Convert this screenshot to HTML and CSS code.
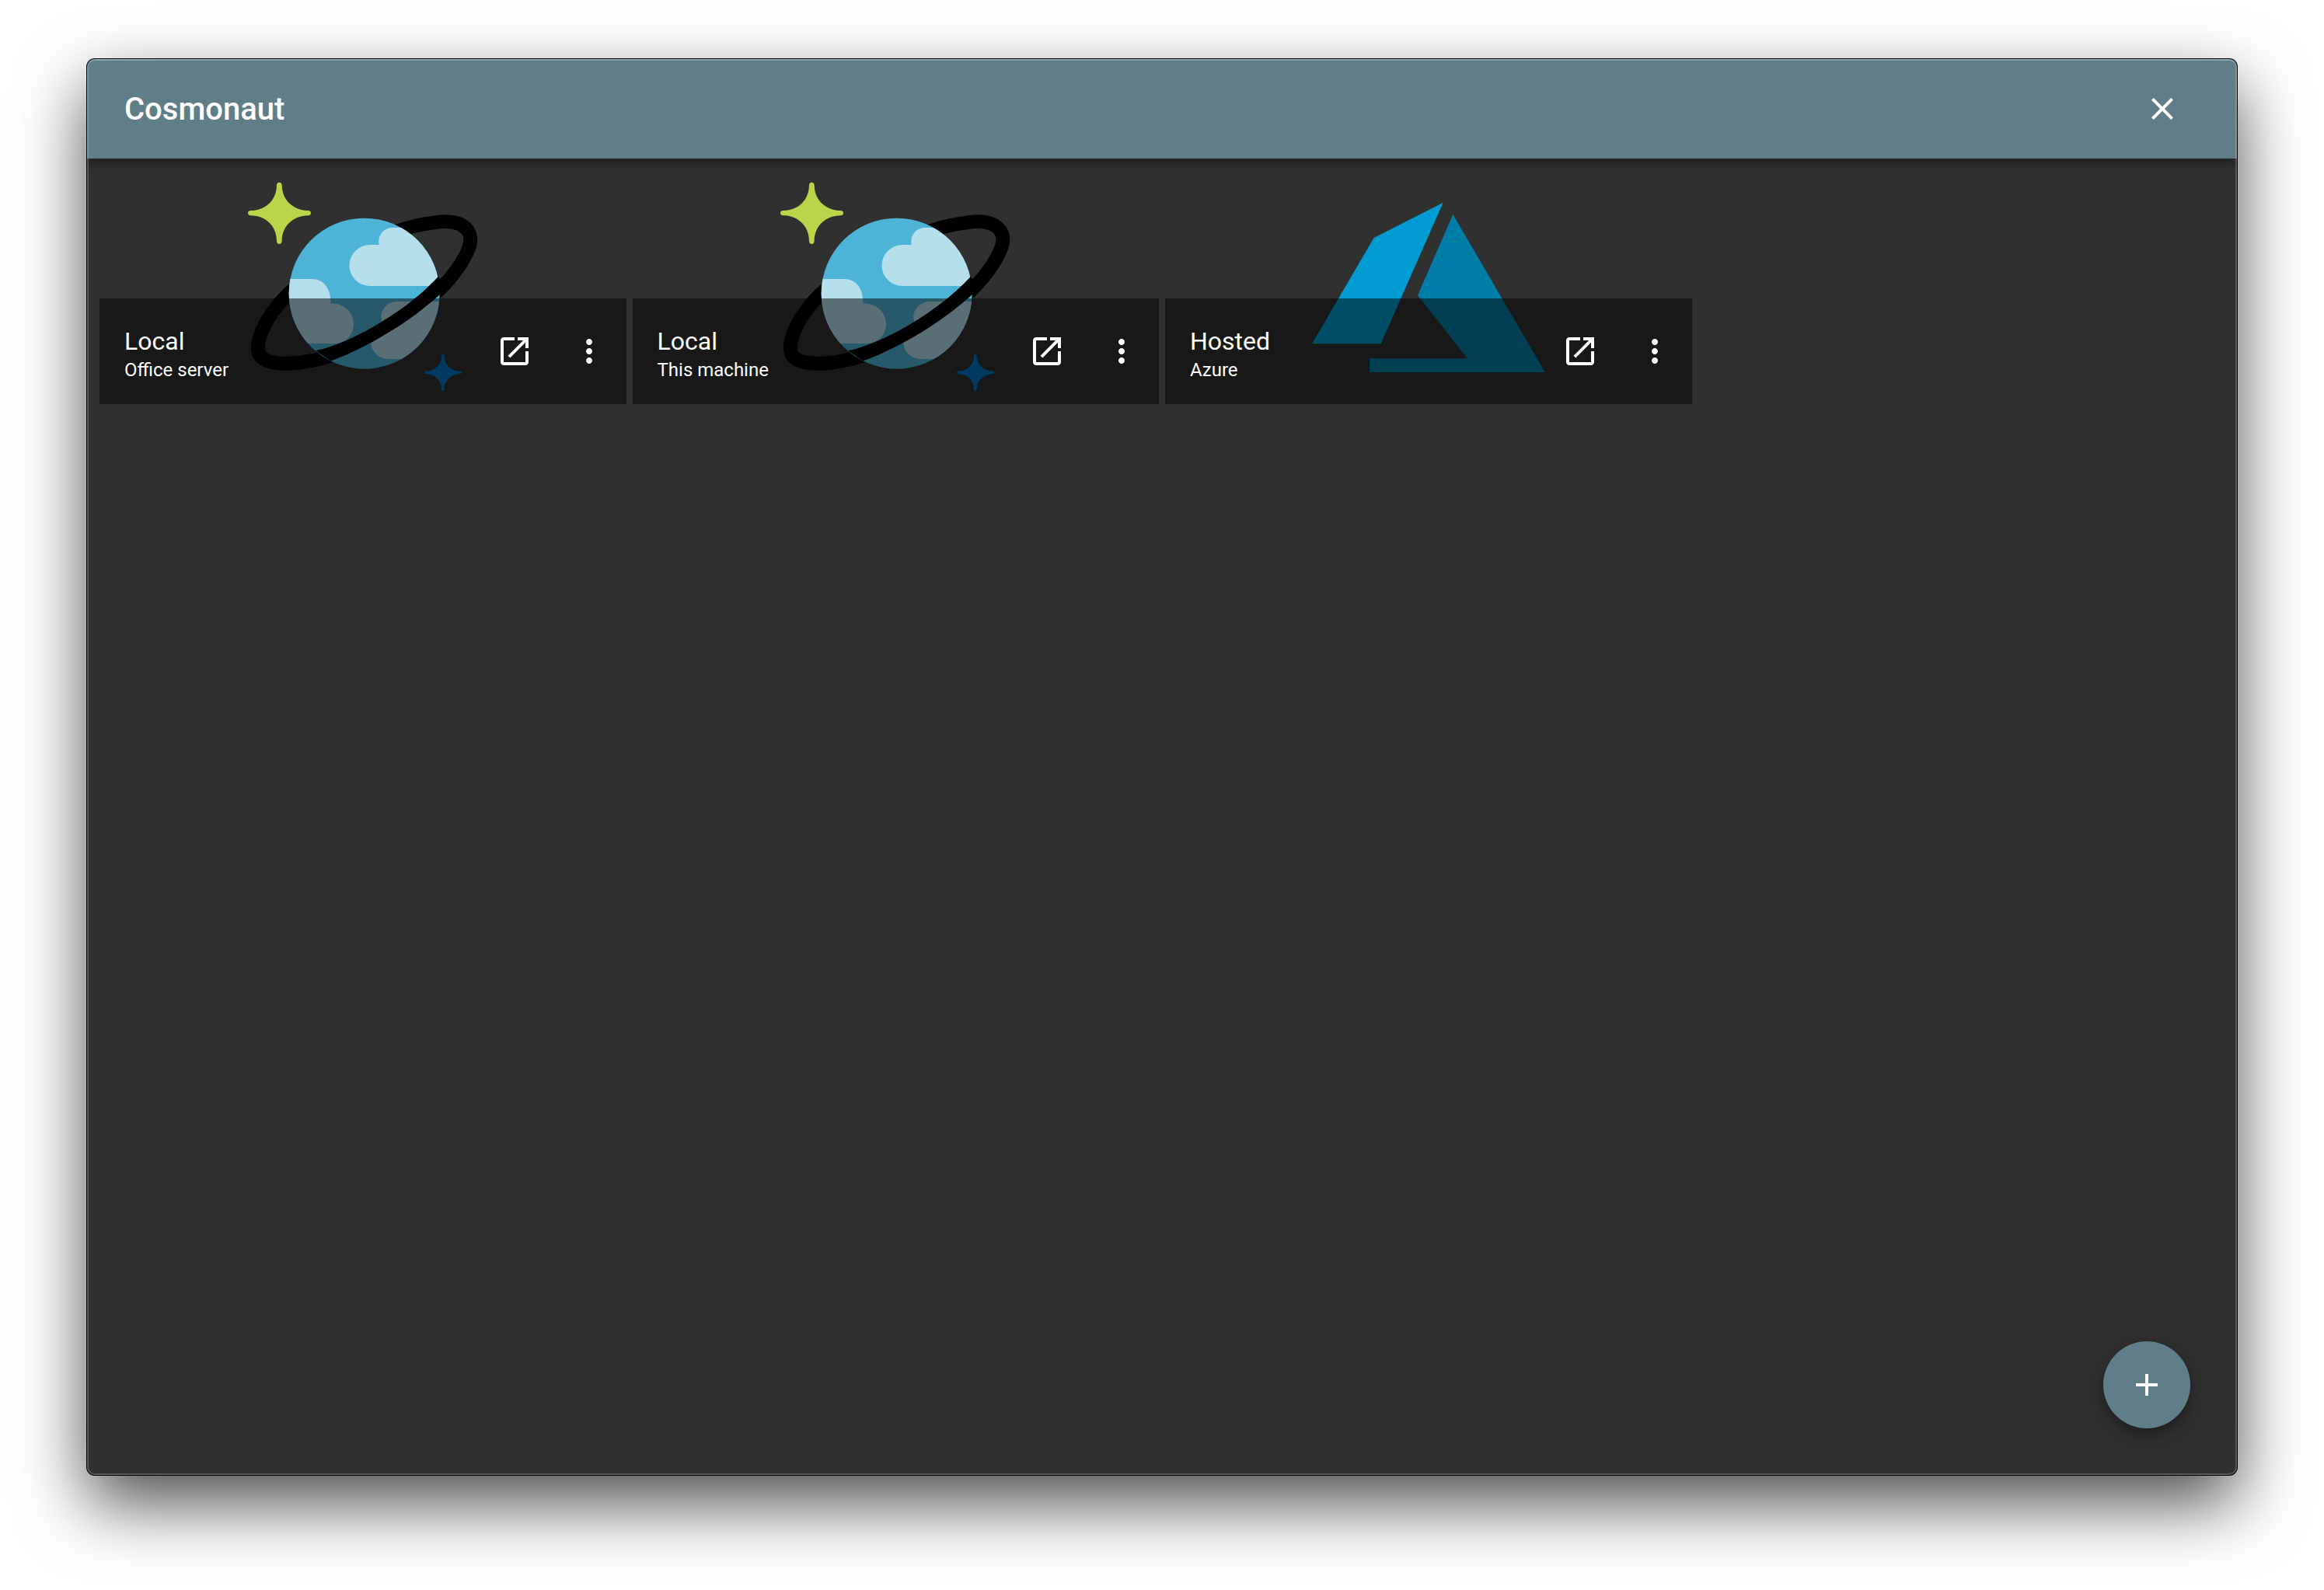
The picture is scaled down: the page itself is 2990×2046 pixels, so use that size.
FILE: index.html
```html
<!DOCTYPE html>
<html lang="en">
<head>
<meta charset="utf-8">
<title>Cosmonaut</title>
<link rel="stylesheet" href="styles.css">
</head>
<body>
<svg class="sprite" aria-hidden="true">
  <symbol id="cosmos" viewBox="-9 -15 960 900">
    <clipPath id="globe"><circle cx="476" cy="458" r="291"/></clipPath>
    <path d="M476 644C650 560 772 450 830 370C880 300 900 250 876 215C850 180 800 175 740 185C560 205 300 350 180 462C90 550 45 660 75 700C120 750 300 735 476 644Z" fill="none" stroke="#000" stroke-width="53"/>
    <circle cx="476" cy="458" r="291" fill="#4db4d7"/>
    <g clip-path="url(#globe)" fill="#b5dfeb">
      <path d="M498 429A79 79 0 0 1 498 270H533C526 235 550 204 585 204H800V429Z"/>
      <path d="M150 402H274C320 402 348 440 346 497C395 494 435 530 435 575C435 620 402 651 358 651H150Z"/>
      <path d="M800 489H608C565 489 536 520 542 560C550 590 502 600 502 644C502 685 535 711 572 711H800Z"/>
    </g>
    <path d="M288 679C350 665 410 640 476 606C590 545 690 470 762 392L790 440C710 520 600 595 500 649C445 678 395 702 346 718Z" fill="#000"/>
    <path d="M148 29C154 29 158 33 158 40C158 95 200 138 260 138C266 138 270 142 270 147C270 153 266 157 260 157C200 157 158 200 158 256C158 263 154 267 148 267C142 267 138 263 138 256C138 200 97 157 38 157C31 157 27 153 27 147C27 142 31 138 38 138C97 138 138 95 138 40C138 33 142 29 148 29Z" fill="#bad54a"/>
    <path d="M779 692C783 692 785 695 785 699C785 732 811 758 846 758C850 758 852 760 852 763C852 767 850 769 846 769C811 769 785 795 785 828C785 832 783 834 779 834C776 834 774 832 774 828C774 795 749 769 714 769C710 769 708 767 708 763C708 760 710 758 714 758C749 758 774 732 774 699C774 695 776 692 779 692Z" fill="#0072c5"/>
  </symbol>
  <symbol id="azure" viewBox="0 0 960 900">
    <path d="M536 122L269 258L30 667H296Z" fill="#009cd1"/>
    <path d="M574 168L438 480L630 724H252V777H930Z" fill="#007ea8"/>
  </symbol>
  <symbol id="open" viewBox="0 0 24 24"><path d="M19 19H5V5h7V3H5c-1.110 0-2 .9-2 2v14c0 1.100.89 2 2 2h14c1.100 0 2-.9 2-2v-7h-2v7zM14 3v2h3.590l-9.830 9.830 1.410 1.410L19 6.410V10h2V3h-7z"/></symbol>
  <symbol id="more" viewBox="0 0 24 24"><path d="M12 8c1.100 0 2-.9 2-2s-.9-2-2-2-2 .9-2 2 .9 2 2 2zm0 2c-1.100 0-2 .9-2 2s.9 2 2 2 2-.9 2-2-.9-2-2-2zm0 6c-1.100 0-2 .9-2 2s.9 2 2 2 2-.9 2-2-.9-2-2-2z"/></symbol>
  <symbol id="close" viewBox="0 0 24 24"><path d="M19 6.410L17.590 5 12 10.590 6.410 5 5 6.410 10.590 12 5 17.590 6.410 19 12 13.410 17.590 19 19 17.590 13.410 12z"/></symbol>
  <symbol id="add" viewBox="0 0 24 24"><path d="M19 13h-6v6h-2v-6H5v-2h6V5h2v6h6v2z"/></symbol>
</svg>
<div class="window">
  <header class="toolbar">
    <h1 class="title">Cosmonaut</h1>
    <button class="icon-button" type="button" aria-label="Close"><svg class="icon"><use href="#close"/></svg></button>
  </header>
  <main class="grid">
    <article class="tile">
      <svg class="logo"><use href="#cosmos"/></svg>
      <footer class="tile-footer">
        <div class="tile-text"><h2 class="name">Local</h2><p class="detail">Office server</p></div>
        <button class="icon-button" type="button" aria-label="Open"><svg class="icon"><use href="#open"/></svg></button>
        <button class="icon-button" type="button" aria-label="More"><svg class="icon"><use href="#more"/></svg></button>
      </footer>
    </article>
    <article class="tile">
      <svg class="logo"><use href="#cosmos"/></svg>
      <footer class="tile-footer">
        <div class="tile-text"><h2 class="name">Local</h2><p class="detail">This machine</p></div>
        <button class="icon-button" type="button" aria-label="Open"><svg class="icon"><use href="#open"/></svg></button>
        <button class="icon-button" type="button" aria-label="More"><svg class="icon"><use href="#more"/></svg></button>
      </footer>
    </article>
    <article class="tile">
      <svg class="logo"><use href="#azure"/></svg>
      <footer class="tile-footer">
        <div class="tile-text"><h2 class="name">Hosted</h2><p class="detail">Azure</p></div>
        <button class="icon-button" type="button" aria-label="Open"><svg class="icon"><use href="#open"/></svg></button>
        <button class="icon-button" type="button" aria-label="More"><svg class="icon"><use href="#more"/></svg></button>
      </footer>
    </article>
  </main>
  <button class="fab" type="button" aria-label="Add"><svg class="icon"><use href="#add"/></svg></button>
</div>
</body>
</html>
```

FILE: styles.css
```css
* {
  box-sizing: border-box;
}

body {
  margin: 0;
  padding: 76px 112px 148px;
  min-height: 100vh;
  display: flex;
  background: #fff;
  color: #fff;
  font-family: Roboto, "Liberation Sans", sans-serif;
  overflow-x: hidden;
}

h1,
h2,
p {
  margin: 0;
  font-weight: 400;
}

.sprite {
  position: absolute;
  width: 0;
  height: 0;
}

.window {
  position: relative;
  flex: 1;
  display: flex;
  flex-direction: column;
  border-radius: 10px;
  background: #303030;
  box-shadow: 0 0 0 1px #000, 0 36px 88px rgba(0, 0, 0, 0.7);
}

/* Light inner rim of the window */
.window::after {
  content: "";
  position: absolute;
  inset: 0;
  border: 2px solid rgba(255, 255, 255, 0.2);
  border-top-color: rgba(255, 255, 255, 0.3);
  border-radius: 10px;
  pointer-events: none;
}

.toolbar {
  display: flex;
  align-items: center;
  justify-content: space-between;
  height: 128px;
  padding: 0 48px;
  border-radius: 10px 10px 0 0;
  background: #5f7e88;
  box-shadow: 0 4px 8px -2px rgba(0, 0, 0, 0.2), 0 8px 10px rgba(0, 0, 0, 0.14), 0 2px 20px rgba(0, 0, 0, 0.12);
  clip-path: inset(0 0 -32px 0);
}

.title {
  padding-top: 2px;
  font-size: 40px;
  line-height: 64px;
  font-weight: 500;
}

.icon-button,
.fab {
  display: flex;
  align-items: center;
  justify-content: center;
  padding: 0;
  border: 0;
  background: none;
  color: #fff;
  cursor: pointer;
}

.icon-button {
  width: 96px;
  height: 96px;
}

.icon {
  width: 48px;
  height: 48px;
  fill: currentColor;
}

.grid {
  display: grid;
  grid-template-columns: repeat(4, 1fr);
  gap: 8px;
  padding: 16px;
}

.tile {
  display: grid;
  grid-template-rows: 164px 136px;
}

.logo {
  grid-area: 1 / 1 / 3 / 2;
  justify-self: center;
  width: 320px;
  height: 300px;
}

.tile-footer {
  grid-area: 2 / 1 / 3 / 2;
  z-index: 1;
  display: flex;
  align-items: center;
  padding-left: 32px;
  background: rgba(0, 0, 0, 0.5);
}

.tile-text {
  flex: 1;
  padding-top: 8px;
}

.name {
  font-size: 32px;
  line-height: 40px;
}

.detail {
  font-size: 24px;
  line-height: 34px;
}

.fab {
  position: absolute;
  right: 60px;
  bottom: 60px;
  width: 112px;
  height: 112px;
  border-radius: 50%;
  background: #5f7e88;
  box-shadow: 0 6px 10px -2px rgba(0, 0, 0, 0.2), 0 12px 20px rgba(0, 0, 0, 0.14), 0 2px 36px rgba(0, 0, 0, 0.12);
}
```
